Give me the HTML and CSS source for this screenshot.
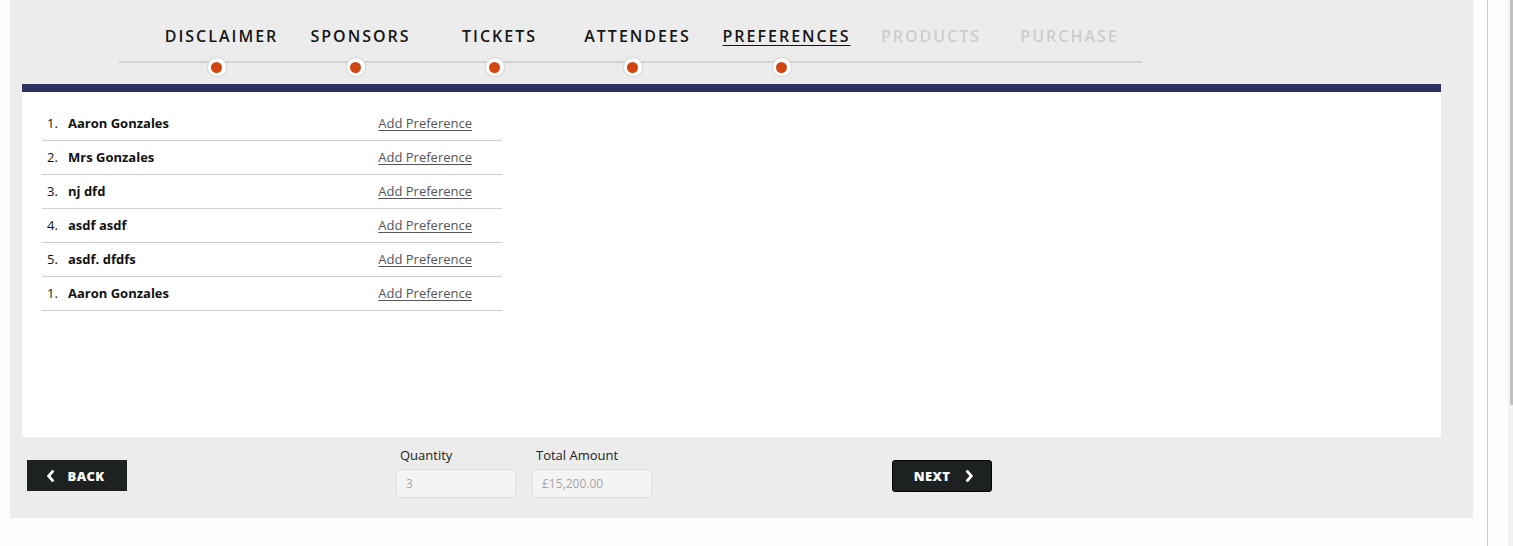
FILE: index.html
```html
<!DOCTYPE html>
<html lang="en">
<head>
<meta charset="utf-8">
<title>Preferences</title>
<link rel="stylesheet" href="styles.css">
</head>
<body>
<div class="page">
  <div class="panel">
    <nav class="steps">
      <ol class="step-list">
        <li class="step done"><span class="label">Disclaimer</span><span class="dot"></span></li>
        <li class="step done"><span class="label">Sponsors</span><span class="dot"></span></li>
        <li class="step done"><span class="label">Tickets</span><span class="dot"></span></li>
        <li class="step done"><span class="label">Attendees</span><span class="dot"></span></li>
        <li class="step active"><span class="label">Preferences</span><span class="dot"></span></li>
        <li class="step todo"><span class="label">Products</span></li>
        <li class="step todo"><span class="label">Purchase</span></li>
      </ol>
    </nav>
    <div class="accent-bar"></div>
    <main class="content">
      <ul class="attendees">
        <li class="row"><span class="num">1.</span><span class="name">Aaron Gonzales</span><a class="add" href="#">Add Preference</a></li>
        <li class="row"><span class="num">2.</span><span class="name">Mrs Gonzales</span><a class="add" href="#">Add Preference</a></li>
        <li class="row"><span class="num">3.</span><span class="name">nj dfd</span><a class="add" href="#">Add Preference</a></li>
        <li class="row"><span class="num">4.</span><span class="name">asdf asdf</span><a class="add" href="#">Add Preference</a></li>
        <li class="row"><span class="num">5.</span><span class="name">asdf. dfdfs</span><a class="add" href="#">Add Preference</a></li>
        <li class="row"><span class="num">1.</span><span class="name">Aaron Gonzales</span><a class="add" href="#">Add Preference</a></li>
      </ul>
    </main>
    <footer class="footer">
      <button class="btn btn-back" type="button">
        <svg class="chev" viewBox="0 0 10 14" width="9" height="12"><path d="M7.3 1.8 L2.8 7 L7.3 12.2" fill="none" stroke="#fff" stroke-width="3.2" stroke-linecap="square" stroke-linejoin="miter"/></svg>
        <span>Back</span>
      </button>
      <div class="field field-qty">
        <label class="field-label">Quantity</label>
        <div class="field-input">3</div>
      </div>
      <div class="field field-total">
        <label class="field-label">Total Amount</label>
        <div class="field-input">£15,200.00</div>
      </div>
      <button class="btn btn-next" type="button">
        <span>Next</span>
        <svg class="chev" viewBox="0 0 10 14" width="9" height="12"><path d="M2.7 1.8 L7.2 7 L2.7 12.2" fill="none" stroke="#fff" stroke-width="3.2" stroke-linecap="square" stroke-linejoin="miter"/></svg>
      </button>
    </footer>
  </div>
  <div class="side-rule"></div>
</div>
<div class="scrollbar"><div class="thumb"></div></div>
</body>
</html>
```
FILE: styles.css
```css
* { box-sizing: border-box; }
html, body { margin: 0; padding: 0; }
body {
  background: #fdfdfd;
  font-family: "Open Sans", "Liberation Sans", sans-serif;
  color: #111;
  height: 546px;
  overflow: hidden;
}
.page {
  display: flex;
  padding-left: 10px;
  height: 546px;
}
.panel {
  width: 1463px;
  height: 518px;
  background: #ececec;
  display: flex;
  flex-direction: column;
}
.side-rule {
  margin-left: 14px;
  width: 1px;
  height: 546px;
  background: #c9c9c9;
}

/* steps */
.steps {
  height: 84px;
  padding-left: 109px;
}
.step-list {
  position: relative;
  list-style: none;
  margin: 0;
  padding: 26px 0 0 28px;
  width: 1023px;
  height: 84px;
  display: grid;
  grid-template-columns: 139px 139px 139px 137px 161px 128px 149px;
}
.step-list::before {
  content: "";
  position: absolute;
  left: 0;
  right: 0;
  top: 61px;
  height: 2px;
  background: #d3d3d3;
}
.step {
  display: flex;
  flex-direction: column;
  align-items: center;
  position: relative;
}
.label {
  font-size: 16px;
  font-weight: 600;
  letter-spacing: 2px;
  text-transform: uppercase;
  line-height: 20px;
  padding-left: 10px;
  white-space: nowrap;
  color: #151515;
}
.step.active .label { text-decoration: underline; text-underline-offset: 3px; text-decoration-thickness: 1px; }
.step.todo .label { color: #cdcdcd; }
.dot {
  position: relative;
  margin-top: 11px;
  width: 20px;
  height: 20px;
  border-radius: 50%;
  background: #fff;
  border: 1px solid #dcdcdc;
  box-shadow: 0 0 1px rgba(0,0,0,0.15);
  display: flex;
  align-items: center;
  justify-content: center;
}
.dot::after {
  content: "";
  width: 11px;
  height: 11px;
  border-radius: 50%;
  background: #d24612;
}

.accent-bar {
  height: 8px;
  margin: 0 32px 0 12px;
  background: #30305e;
}
.content {
  height: 345px;
  margin: 0 32px 0 12px;
  background: #fff;
  padding: 15px 20px 0;
}
.attendees {
  list-style: none;
  margin: 0;
  padding: 0;
  width: 460px;
}
.row {
  display: flex;
  align-items: center;
  height: 34px;
  border-bottom: 1px solid #cfcfcf;
  padding: 0 30px 2px 5px;
  font-size: 13px;
}
.num {
  width: 21px;
  color: #111;
}
.name {
  flex: 1;
  font-weight: 700;
  color: #111;
}
.add {
  color: #555;
  text-decoration: underline;
  text-underline-offset: 2px;
}

/* footer */
.footer {
  display: flex;
  align-items: flex-start;
  padding: 9px 0 0 17px;
}
.btn {
  margin-top: 14px;
  height: 31px;
  width: 100px;
  border: none;
  background: #1e2122;
  color: #fff;
  font-family: "Open Sans", "Liberation Sans", sans-serif;
  font-size: 13px;
  font-weight: 800;
  text-transform: uppercase;
  letter-spacing: 0.3px;
  display: flex;
  align-items: center;
  justify-content: center;
  padding: 0;
}
.btn-back { gap: 13px; padding-right: 4px; }
.btn-next {
  margin-left: 240px;
  height: 32px;
  border: 1px solid #000;
  border-radius: 3px;
  gap: 15px;
  padding-left: 4px;
}
.chev { display: block; }
.field { width: 120px; display: flex; flex-direction: column; }
.field-qty { margin-left: 269px; }
.field-total { margin-left: 16px; }
.field-label {
  font-size: 13px;
  line-height: 18px;
  color: #222;
  padding-left: 4px;
  margin-bottom: 5px;
}
.field-input {
  height: 29px;
  border: 1px solid #dedede;
  border-radius: 4px;
  background: #f4f4f4;
  color: #a8a8a8;
  font-size: 12px;
  line-height: 27px;
  padding-left: 9px;
}

.scrollbar {
  position: fixed;
  top: 0;
  left: 1508px;
  width: 5px;
  height: 546px;
  background: #f1f1f1;
}
.thumb {
  margin-left: 2px;
  width: 3px;
  height: 405px;
  background: #c1c1c1;
}
```
